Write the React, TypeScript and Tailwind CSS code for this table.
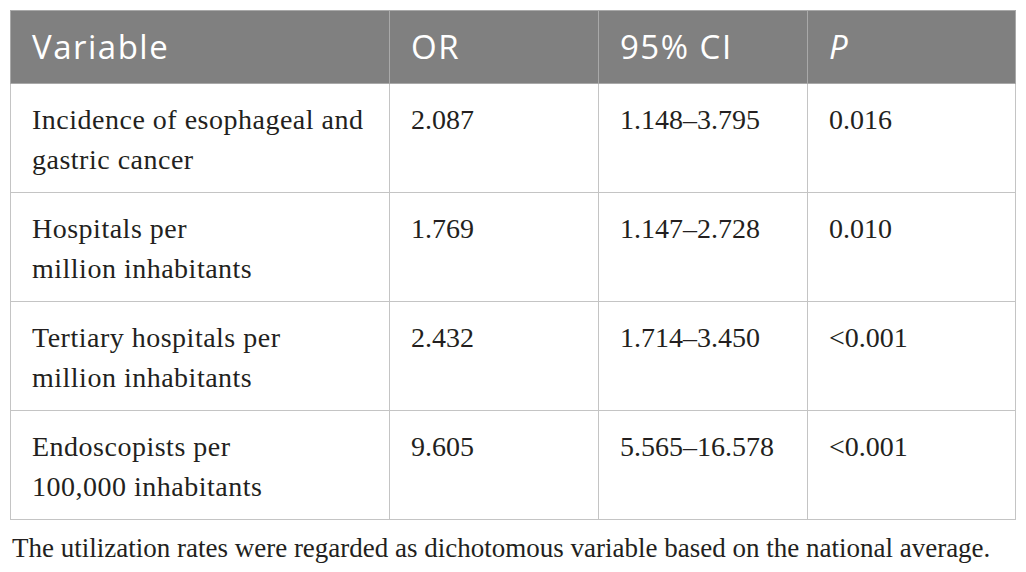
import React from "react";

const rows = [
  { v: ["Incidence of esophageal and", "gastric cancer"], or: "2.087", ci: "1.148–3.795", p: "0.016" },
  { v: ["Hospitals per", "million inhabitants"], or: "1.769", ci: "1.147–2.728", p: "0.010" },
  { v: ["Tertiary hospitals per", "million inhabitants"], or: "2.432", ci: "1.714–3.450", p: "<0.001" },
  { v: ["Endoscopists per", "100,000 inhabitants"], or: "9.605", ci: "5.565–16.578", p: "<0.001" },
];

export default function App() {
  const serif = { fontFamily: '"Liberation Serif", "Times New Roman", serif' };
  return (
    <div className="w-[1026px] h-[572px] bg-white pt-[10px] pl-[10px]" style={serif}>
      <table className="border-collapse w-[1005px] table-fixed">
        <colgroup>
          <col className="w-[379px]" />
          <col className="w-[209px]" />
          <col className="w-[209px]" />
          <col className="w-[208px]" />
        </colgroup>
        <thead>
          <tr className="h-[73px] bg-[#808080] text-white text-[33px] tracking-[1.5px] font-['Open_Sans',sans-serif]">
            <th className="border border-[#a9a9a9] text-left font-normal pl-[21px] align-middle">Variable</th>
            <th className="border border-[#a9a9a9] text-left font-normal pl-[21px] align-middle">OR</th>
            <th className="border border-[#a9a9a9] text-left font-normal pl-[21px] align-middle">95% CI</th>
            <th className="border border-[#a9a9a9] text-left font-normal pl-[21px] align-middle italic">P</th>
          </tr>
        </thead>
        <tbody className="text-[28px] leading-[40px] text-[#231f20]">
          {rows.map((r, i) => (
            <tr key={i} className="h-[109px]">
              <td className="border border-[#c4c4c4] align-top pl-[21px] pt-[16px] tracking-[0.5px]">
                <div>{r.v[0]}</div>
                <div>{r.v[1]}</div>
              </td>
              <td className="border border-[#c4c4c4] align-top pl-[21px] pt-[16px]">{r.or}</td>
              <td className="border border-[#c4c4c4] align-top pl-[21px] pt-[16px]">{r.ci}</td>
              <td className="border border-[#c4c4c4] align-top pl-[21px] pt-[16px]">{r.p}</td>
            </tr>
          ))}
        </tbody>
      </table>
      <p className="text-[27px] leading-[40px] text-[#231f20] mt-[8px] pl-[2px] whitespace-nowrap">
        The utilization rates were regarded as dichotomous variable based on the national average.
      </p>
    </div>
  );
}
